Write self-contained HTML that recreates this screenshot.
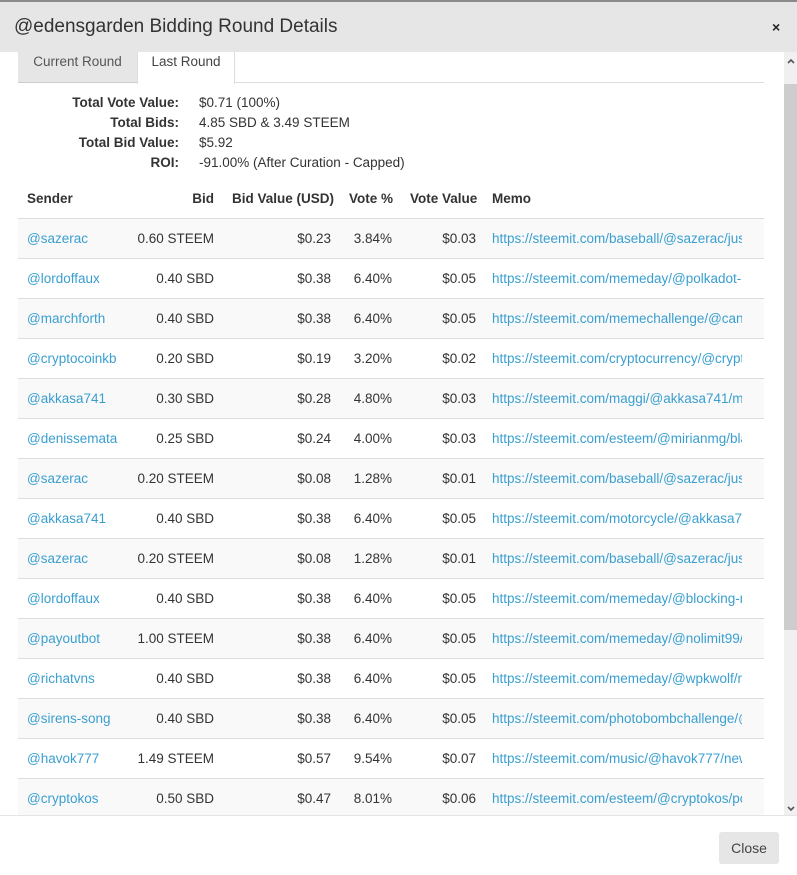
<!DOCTYPE html>
<html><head><meta charset="utf-8"><style>
*{box-sizing:border-box;margin:0;padding:0}
html,body{width:797px;height:875px;overflow:hidden;background:#fff;font-family:"Liberation Sans",sans-serif;color:#333;font-size:13.5px}
.hdr{position:absolute;left:0;top:0;width:797px;height:52px;background:#e6e6e6;border-top:2px solid #8a8a8a}
.hdr h1{position:absolute;left:14px;top:14px;font-size:19px;font-weight:normal;color:#333}
.x{position:absolute;left:772px;top:17px;font-size:14px;font-weight:bold;color:#222}
.body{position:absolute;left:0;top:52px;width:784px;height:764px;overflow:hidden}
.tabs{position:absolute;left:18px;top:0;width:746px;height:31px;border-bottom:1px solid #ddd}
.tab{position:absolute;top:0;height:31px;line-height:18px;padding-top:1px;font-size:13.5px}
.t1{left:0;width:119px;background:#e6e6e6;color:#555;border-bottom:1px solid #ccc;text-align:center}
.t2{left:119px;width:98px;background:#fff;border-right:1px solid #ddd;border-left:1px solid #ddd;height:32px;text-align:center;color:#444}
.sum{position:absolute;top:41px;left:0;width:500px}
.sum div{height:20px;line-height:20px}
.sum b{display:inline-block;width:179px;text-align:right;font-weight:bold;color:#333}
.sum span{margin-left:20px}
table{position:absolute;left:18px;top:127px;width:746px;border-collapse:collapse;table-layout:fixed}
th{height:39px;font-weight:bold;text-align:left;padding:0 9px;white-space:nowrap}
td{height:40px;border-top:1px solid #ddd;padding:0 9px;white-space:nowrap;overflow:hidden}
tr:nth-child(even) td{background:#f9f9f9}
.r{text-align:right}
a{color:#3a9fd0;text-decoration:none}
td.m{padding-left:7px;padding-right:0}
td.m a{display:block;width:250px;overflow:hidden}
.sb{position:absolute;left:784px;top:52px;width:13px;height:764px;background:#f0f0f0}
.th{position:absolute;left:0;top:32px;width:13px;height:546px;background:#cdcdcd}
.ft{position:absolute;left:0;top:815px;width:797px;height:60px;border-top:1px solid #e5e5e5}
.btn{position:absolute;left:719px;top:16px;width:60px;height:32px;background:#e6e6e6;border-radius:3px;text-align:center;line-height:32px;font-size:14px;color:#444}
</style></head><body>
<div class="hdr"><h1>@edensgarden Bidding Round Details</h1><div class="x">×</div></div>
<div class="body">
<div class="tabs"><div class="tab t1">Current Round</div><div class="tab t2">Last Round</div></div>
<div class="sum">
<div><b>Total Vote Value:</b><span>$0.71 (100%)</span></div>
<div><b>Total Bids:</b><span>4.85 SBD &amp; 3.49 STEEM</span></div>
<div><b>Total Bid Value:</b><span>$5.92</span></div>
<div><b>ROI:</b><span>-91.00% (After Curation - Capped)</span></div>
</div>
<table>
<colgroup><col style="width:106px"><col style="width:99px"><col style="width:117px"><col style="width:61px"><col style="width:84px"><col style="width:279px"></colgroup>
<tr><th>Sender</th><th class="r">Bid</th><th class="r">Bid Value (USD)</th><th class="r">Vote %</th><th class="r">Vote Value</th><th style="padding-left:7px">Memo</th></tr>
<tr><td><a>@sazerac</a></td><td class="r">0.60 STEEM</td><td class="r">$0.23</td><td class="r">3.84%</td><td class="r">$0.03</td><td class="m"><a>https://steemit.com/baseball/@sazerac/just-a-link</a></td></tr>
<tr><td><a>@lordoffaux</a></td><td class="r">0.40 SBD</td><td class="r">$0.38</td><td class="r">6.40%</td><td class="r">$0.05</td><td class="m"><a>https://steemit.com/memeday/@polkadot-meme</a></td></tr>
<tr><td><a>@marchforth</a></td><td class="r">0.40 SBD</td><td class="r">$0.38</td><td class="r">6.40%</td><td class="r">$0.05</td><td class="m"><a>https://steemit.com/memechallenge/@candy-meme</a></td></tr>
<tr><td><a>@cryptocoinkb</a></td><td class="r">0.20 SBD</td><td class="r">$0.19</td><td class="r">3.20%</td><td class="r">$0.02</td><td class="m"><a>https://steemit.com/cryptocurrency/@cryptocoinkb</a></td></tr>
<tr><td><a>@akkasa741</a></td><td class="r">0.30 SBD</td><td class="r">$0.28</td><td class="r">4.80%</td><td class="r">$0.03</td><td class="m"><a>https://steemit.com/maggi/@akkasa741/maggi-noodles</a></td></tr>
<tr><td><a>@denissemata</a></td><td class="r">0.25 SBD</td><td class="r">$0.24</td><td class="r">4.00%</td><td class="r">$0.03</td><td class="m"><a>https://steemit.com/esteem/@mirianmg/bla-bla</a></td></tr>
<tr><td><a>@sazerac</a></td><td class="r">0.20 STEEM</td><td class="r">$0.08</td><td class="r">1.28%</td><td class="r">$0.01</td><td class="m"><a>https://steemit.com/baseball/@sazerac/just-a-link</a></td></tr>
<tr><td><a>@akkasa741</a></td><td class="r">0.40 SBD</td><td class="r">$0.38</td><td class="r">6.40%</td><td class="r">$0.05</td><td class="m"><a>https://steemit.com/motorcycle/@akkasa741/bike</a></td></tr>
<tr><td><a>@sazerac</a></td><td class="r">0.20 STEEM</td><td class="r">$0.08</td><td class="r">1.28%</td><td class="r">$0.01</td><td class="m"><a>https://steemit.com/baseball/@sazerac/just-a-link</a></td></tr>
<tr><td><a>@lordoffaux</a></td><td class="r">0.40 SBD</td><td class="r">$0.38</td><td class="r">6.40%</td><td class="r">$0.05</td><td class="m"><a>https://steemit.com/memeday/@blocking-meme</a></td></tr>
<tr><td><a>@payoutbot</a></td><td class="r">1.00 STEEM</td><td class="r">$0.38</td><td class="r">6.40%</td><td class="r">$0.05</td><td class="m"><a>https://steemit.com/memeday/@nolimit99/meme</a></td></tr>
<tr><td><a>@richatvns</a></td><td class="r">0.40 SBD</td><td class="r">$0.38</td><td class="r">6.40%</td><td class="r">$0.05</td><td class="m"><a>https://steemit.com/memeday/@wpkwolf/meme</a></td></tr>
<tr><td><a>@sirens-song</a></td><td class="r">0.40 SBD</td><td class="r">$0.38</td><td class="r">6.40%</td><td class="r">$0.05</td><td class="m"><a>https://steemit.com/photobombchallenge/@sirens</a></td></tr>
<tr><td><a>@havok777</a></td><td class="r">1.49 STEEM</td><td class="r">$0.57</td><td class="r">9.54%</td><td class="r">$0.07</td><td class="m"><a>https://steemit.com/music/@havok777/new-song</a></td></tr>
<tr><td><a>@cryptokos</a></td><td class="r">0.50 SBD</td><td class="r">$0.47</td><td class="r">8.01%</td><td class="r">$0.06</td><td class="m"><a>https://steemit.com/esteem/@cryptokos/post-abc</a></td></tr>
</table>
</div>
<div class="sb"><svg style="position:absolute;left:3px;top:6px" width="8" height="6"><path d="M1 5L4 2L7 5" stroke="#555" stroke-width="1.6" fill="none"/></svg><div class="th"></div><svg style="position:absolute;left:3px;top:754px" width="8" height="6"><path d="M1 1L4 4L7 1" stroke="#555" stroke-width="1.6" fill="none"/></svg></div>
<div class="ft"><div class="btn">Close</div></div>
</body></html>
